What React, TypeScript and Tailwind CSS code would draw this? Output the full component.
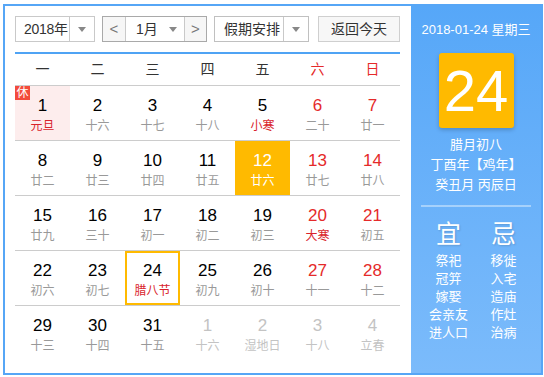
import { FC } from 'react'

type Day = {
	n: number
	l: string
	weekend?: boolean
	redLunar?: boolean
	other?: boolean
	holiday?: boolean
	selected?: boolean
	today?: boolean
}

const weeks: Day[][] = [
	[
		{ n: 1, l: '元旦', redLunar: true, holiday: true },
		{ n: 2, l: '十六' },
		{ n: 3, l: '十七' },
		{ n: 4, l: '十八' },
		{ n: 5, l: '小寒', redLunar: true },
		{ n: 6, l: '二十', weekend: true },
		{ n: 7, l: '廿一', weekend: true },
	],
	[
		{ n: 8, l: '廿二' },
		{ n: 9, l: '廿三' },
		{ n: 10, l: '廿四' },
		{ n: 11, l: '廿五' },
		{ n: 12, l: '廿六', selected: true },
		{ n: 13, l: '廿七', weekend: true },
		{ n: 14, l: '廿八', weekend: true },
	],
	[
		{ n: 15, l: '廿九' },
		{ n: 16, l: '三十' },
		{ n: 17, l: '初一' },
		{ n: 18, l: '初二' },
		{ n: 19, l: '初三' },
		{ n: 20, l: '大寒', weekend: true, redLunar: true },
		{ n: 21, l: '初五', weekend: true },
	],
	[
		{ n: 22, l: '初六' },
		{ n: 23, l: '初七' },
		{ n: 24, l: '腊八节', redLunar: true, today: true },
		{ n: 25, l: '初九' },
		{ n: 26, l: '初十' },
		{ n: 27, l: '十一', weekend: true },
		{ n: 28, l: '十二', weekend: true },
	],
	[
		{ n: 29, l: '十三' },
		{ n: 30, l: '十四' },
		{ n: 31, l: '十五' },
		{ n: 1, l: '十六', other: true },
		{ n: 2, l: '湿地日', other: true },
		{ n: 3, l: '十八', other: true },
		{ n: 4, l: '立春', other: true },
	],
]

const weekdays = ['一', '二', '三', '四', '五', '六', '日']
const yi = ['祭祀', '冠笄', '嫁娶', '会亲友', '进人口']
const ji = ['移徙', '入宅', '造庙', '作灶', '治病']

const Caret: FC = () => (
	<span className="w-0 h-0 border-x-[4px] border-x-transparent border-t-[5px] border-t-[#888]" />
)

const Cell: FC<{ d: Day }> = ({ d }) => {
	let bg = 'bg-white'
	if (d.holiday) bg = 'bg-[#fdeded]'
	if (d.selected) bg = 'bg-[#ffba00]'
	let numColor = 'text-black'
	let lunarColor = 'text-[#999]'
	if (d.weekend) numColor = 'text-[#e52a2a]'
	if (d.redLunar) lunarColor = 'text-[#d9232b]'
	if (d.other) {
		numColor = 'text-[#c3c3c3]'
		lunarColor = 'text-[#c3c3c3]'
	}
	if (d.selected) {
		numColor = 'text-white'
		lunarColor = 'text-white'
	}
	return (
		<div
			className={`relative h-[54px] flex flex-col items-center ${bg} ${
				d.today ? 'border-2 border-[#ffba00] pt-[9px]' : 'pt-[11px]'
			}`}
		>
			{d.holiday && (
				<span className="absolute left-0 top-0 w-[15px] h-[14px] bg-[#f34b3c] text-white text-[12px] leading-[14px] text-center">
					休
				</span>
			)}
			<span className={`text-[17px] leading-[18px] ${numColor}`}>{d.n}</span>
			<span className={`text-[12px] leading-[16px] mt-[3px] ${lunarColor}`}>{d.l}</span>
		</div>
	)
}

const App: FC = () => {
	return (
		<div
			className="ml-[3px] mt-[4px] w-[540px] h-[371px] border-2 border-[#56a6f6] flex bg-white"
			style={{ fontFamily: '"Liberation Sans", Arial, "Noto Sans CJK SC", sans-serif' }}
		>
			<div className="w-[406px] pl-[10px] pr-[11px] pt-[10px]">
				<div className="flex h-[26px] text-[14px] text-[#333] whitespace-nowrap">
					<div className="w-[80px] shrink-0 flex border border-[#c9c9c9]">
						<span className="flex-1 pl-[8px] leading-[24px] tracking-[-0.3px]">2018年</span>
						<span className="w-[25px] shrink-0 border-l border-[#c9c9c9] flex items-center justify-center">
							<Caret />
						</span>
					</div>
					<div className="ml-[7px] w-[105px] shrink-0 flex border border-[#a9a9a9]">
						<span className="w-[23px] shrink-0 bg-[#f6f6f6] border-r border-[#c9c9c9] flex items-center justify-center text-[#777] text-[15px]">
							&lt;
						</span>
						<span className="flex-1 flex items-center pl-[10px] pr-[7px]">
							<span className="flex-1 leading-[24px]">1月</span>
							<Caret />
						</span>
						<span className="w-[22px] shrink-0 bg-[#f6f6f6] border-l border-[#c9c9c9] flex items-center justify-center text-[#777] text-[15px]">
							&gt;
						</span>
					</div>
					<div className="ml-[7px] w-[95px] shrink-0 flex border border-[#c0c0c0]">
						<span className="flex-1 pl-[9px] leading-[24px]">假期安排</span>
						<span className="w-[25px] shrink-0 border-l border-[#c9c9c9] flex items-center justify-center">
							<Caret />
						</span>
					</div>
					<div className="ml-[9px] w-[82px] shrink-0 border border-[#cfcfcf] bg-[#f7f7f7] text-center leading-[24px]">
						返回今天
					</div>
				</div>
				<div className="mt-[10px] h-[2px] bg-[#4fa3f4]" />
				<div className="grid grid-cols-7 h-[32px] items-center text-[14px] text-[#333] border-b border-[#cccccc]">
					{weekdays.map((w, i) => (
						<span key={w} className={`text-center ${i >= 5 ? 'text-[#e52a2a]' : ''}`}>
							{w}
						</span>
					))}
				</div>
				{weeks.map((row, i) => (
					<div
						key={i}
						className={`grid grid-cols-7 ${i < weeks.length - 1 ? 'border-b border-[#cccccc]' : ''}`}
					>
						{row.map((d, j) => (
							<Cell key={j} d={d} />
						))}
					</div>
				))}
			</div>
			<div className="w-[130px] h-full bg-linear-to-b from-[#56a7f8] to-[#7bbbfb] text-white flex flex-col items-center">
				<div className="pt-[16px] text-[13px] leading-[16px]">2018-01-24 星期三</div>
				<div className="mt-[15px] w-[75px] h-[75px] rounded-[3px] bg-[#ffba00] shadow-[0_2px_4px_rgba(0,0,0,0.2)] flex items-center justify-center text-[58px] leading-none">
					24
				</div>
				<div className="mt-[7px] text-[13px] leading-[20px] text-center">
					<div>腊月初八</div>
					<div>丁酉年【鸡年】</div>
					<div>癸丑月 丙辰日</div>
				</div>
				<div className="mt-[10px] w-[110px] h-[2px] bg-white/40" />
				<div className="mt-[12px] w-[110px] grid grid-cols-2">
					<div className="flex flex-col items-center">
						<span className="text-[25px] leading-[30px] [text-shadow:1px_1px_2px_rgba(0,0,0,0.15)]">宜</span>
						<div className="mt-[3px] text-[13px] leading-[18px] text-center">
							{yi.map((t) => (
								<div key={t}>{t}</div>
							))}
						</div>
					</div>
					<div className="flex flex-col items-center">
						<span className="text-[25px] leading-[30px] [text-shadow:1px_1px_2px_rgba(0,0,0,0.15)]">忌</span>
						<div className="mt-[3px] text-[13px] leading-[18px] text-center">
							{ji.map((t) => (
								<div key={t}>{t}</div>
							))}
						</div>
					</div>
				</div>
			</div>
		</div>
	)
}

export default App
